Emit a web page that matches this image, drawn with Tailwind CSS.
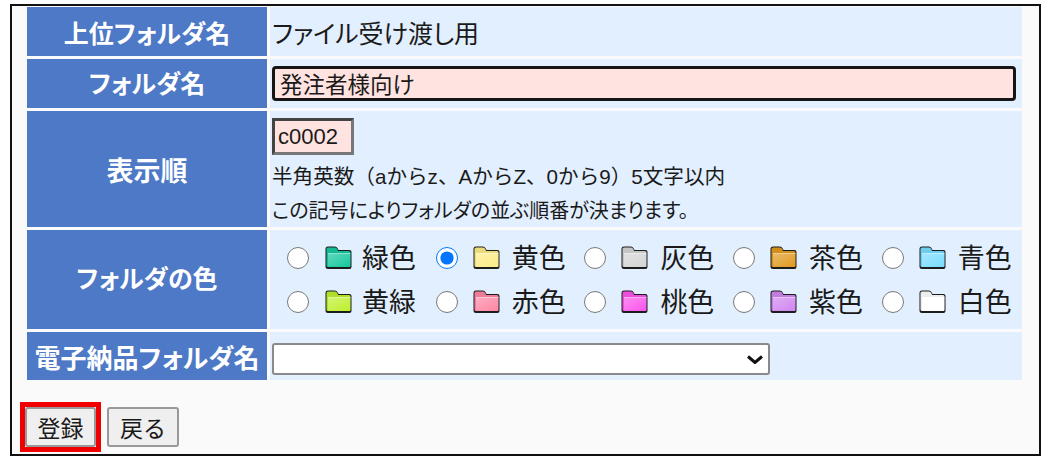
<!DOCTYPE html>
<html lang="ja">
<head>
<meta charset="UTF-8">
<title>フォルダ登録</title>
<script src="https://cdn.jsdelivr.net/npm/@tailwindcss/browser@4"></script>
</head>
<body class="bg-white font-['Liberation_Sans','Noto_Sans_CJK_JP',sans-serif] text-[#1a1a1a]">
<svg class="absolute size-0">
  <defs>
    <linearGradient id="sheen" x1="0" y1="0" x2="1" y2="1">
      <stop offset="0" stop-color="#fff" stop-opacity=".32"/>
      <stop offset="1" stop-color="#fff" stop-opacity="0"/>
    </linearGradient>
  </defs>
  <symbol id="folder" viewBox="0 0 27 23">
    <path d="M.5 20.500V3Q.5 .5 3 .5H10Q12 .5 13 3L13.500 4H24.500Q26.500 4 26.500 6V21Q26.500 23 24.500 23H3Q.5 23 .5 20.500Z" fill="#1c1c1c"/>
    <path d="M1.500 19.500V3Q1.500 1.500 3 1.500H10Q11.500 1.500 12.500 3.500L13 5H24Q25.500 5 25.500 6.500V20Q25.500 21 24.500 21H3Q1.500 21 1.500 19.500Z" fill="currentColor"/>
    <path d="M1.500 19.500V3Q1.500 1.500 3 1.500H10Q11.500 1.500 12.500 3.500L13 5H24Q25.500 5 25.500 6.500V7H3V21Q1.500 21 1.500 19.500Z" fill="#000" opacity=".07"/>
    <path d="M3 7H25.500V8H3Z" fill="#fff" opacity=".5"/>
    <path d="M3 8H25.500V20.500H3Z" fill="url(#sheen)"/>
  </symbol>
</svg>
<div class="mt-[4px] ml-[10px] h-[452px] w-[1031px] border-2 border-[#111] bg-[#fafafa] pt-[1.300px] pl-[15px]">
  <div class="grid w-[995px] grid-cols-[240px_minmax(0,1fr)] grid-rows-[48.700px_48.600px_116.700px_98.700px_48.300px] gap-[3px]">
    <div class="flex items-center justify-center bg-[#4e79c6] pt-[6px] text-[25px] font-bold text-white [font-feature-settings:'palt']">上位フォルダ名</div>
    <div class="flex items-center bg-[#e2effe] pt-[6px] pl-[2px] text-[25px] [font-feature-settings:'palt']">ファイル受け渡し用</div>

    <div class="flex items-center justify-center bg-[#4e79c6] pt-[3px] text-[25px] font-bold text-white [font-feature-settings:'palt']">フォルダ名</div>
    <div class="flex items-center bg-[#e2effe] pl-[2px]">
      <input type="text" value="発注者様向け" class="h-[35px] w-[744px] rounded-[4px] border-[3px] border-[#151515] bg-[#ffe3e0] pl-[5px] text-[22.500px] outline-none">
    </div>

    <div class="flex items-center justify-center bg-[#4e79c6] pt-[6px] text-[27px] font-bold text-white">表示順</div>
    <div class="flex flex-col bg-[#e2effe] pt-[7px] pl-[2px]">
      <input type="text" value="c0002" class="h-[37px] w-[82px] border-[3px] border-t-[#444] border-r-[#777] border-b-[#777] border-l-[#444] bg-[#ffe3e0] pt-[1px] pl-[3px] text-[22px] outline-none">
      <p class="mt-[7px] text-[20.600px] leading-[30px]">半角英数（aからz、AからZ、0から9）5文字以内</p>
      <p class="mt-[3px] text-[20px] leading-[32px] [font-feature-settings:'palt']">この記号によりフォルダの並ぶ順番が決まります。</p>
    </div>

    <div class="flex items-center justify-center bg-[#4e79c6] pt-[1px] text-[25px] font-bold text-white [font-feature-settings:'palt']">フォルダの色</div>
    <div class="grid grid-cols-[repeat(4,148.700px)_1fr] grid-rows-[44px_44px] content-center bg-[#e2effe] pl-[17px] text-[27px]">
      <label class="flex items-center"><input type="radio" name="color" class="size-[22px] accent-[#0075ff]"><svg class="ml-[16px] h-[23px] w-[27px] text-[#14c79e]"><use href="#folder"/></svg><span class="ml-[10px] pt-[3px]">緑色</span></label>
      <label class="flex items-center"><input type="radio" name="color" checked class="size-[22px] accent-[#0075ff]"><svg class="ml-[15px] h-[23px] w-[27px] text-[#fbec85]"><use href="#folder"/></svg><span class="ml-[12px] pt-[3px]">黄色</span></label>
      <label class="flex items-center"><input type="radio" name="color" class="size-[22px] accent-[#0075ff]"><svg class="ml-[15px] h-[23px] w-[27px] text-[#d4d4d4]"><use href="#folder"/></svg><span class="ml-[12px] pt-[3px]">灰色</span></label>
      <label class="flex items-center"><input type="radio" name="color" class="size-[22px] accent-[#0075ff]"><svg class="ml-[15px] h-[23px] w-[27px] text-[#e09a20]"><use href="#folder"/></svg><span class="ml-[12px] pt-[3px]">茶色</span></label>
      <label class="flex items-center"><input type="radio" name="color" class="size-[22px] accent-[#0075ff]"><svg class="ml-[15px] h-[23px] w-[27px] text-[#78dcff]"><use href="#folder"/></svg><span class="ml-[12px] pt-[3px]">青色</span></label>
      <label class="flex items-center"><input type="radio" name="color" class="size-[22px] accent-[#0075ff]"><svg class="ml-[16px] h-[23px] w-[27px] text-[#bdf02c]"><use href="#folder"/></svg><span class="ml-[10px] pt-[3px]">黄緑</span></label>
      <label class="flex items-center"><input type="radio" name="color" class="size-[22px] accent-[#0075ff]"><svg class="ml-[15px] h-[23px] w-[27px] text-[#ff86a4]"><use href="#folder"/></svg><span class="ml-[12px] pt-[3px]">赤色</span></label>
      <label class="flex items-center"><input type="radio" name="color" class="size-[22px] accent-[#0075ff]"><svg class="ml-[15px] h-[23px] w-[27px] text-[#fb55ec]"><use href="#folder"/></svg><span class="ml-[12px] pt-[3px]">桃色</span></label>
      <label class="flex items-center"><input type="radio" name="color" class="size-[22px] accent-[#0075ff]"><svg class="ml-[15px] h-[23px] w-[27px] text-[#d086f0]"><use href="#folder"/></svg><span class="ml-[12px] pt-[3px]">紫色</span></label>
      <label class="flex items-center"><input type="radio" name="color" class="size-[22px] accent-[#0075ff]"><svg class="ml-[15px] h-[23px] w-[27px] text-[#ffffff]"><use href="#folder"/></svg><span class="ml-[12px] pt-[3px]">白色</span></label>
    </div>

    <div class="flex items-center justify-center bg-[#4e79c6] pt-[6px] text-[26px] font-bold text-white [font-feature-settings:'palt']">電子納品フォルダ名</div>
    <div class="flex items-center bg-[#e2effe] pt-[6px] pl-[2px]">
      <div class="relative h-[32px] w-[498px]">
        <select class="size-full appearance-none rounded-[3px] border-2 border-[#8a8a8a] bg-white text-[20px]"><option></option></select>
        <svg class="pointer-events-none absolute top-[12px] right-[7px] h-[9px] w-[16px]" viewBox="0 0 16 9" fill="none" stroke="#111" stroke-width="3"><path d="M1 1.500L8 7.500L15 1.500"/></svg>
      </div>
    </div>
  </div>

  <div class="mt-[22px] -ml-[7px] flex items-center">
    <div class="border-[5px] border-[#f00000]">
      <button class="h-[40px] w-[71px] rounded-[3px] border-2 border-[#999] bg-[#efefef] pt-[3px] text-[23px]">登録</button>
    </div>
    <button class="ml-[6px] h-[40px] w-[72px] rounded-[3px] border-2 border-[#999] bg-[#efefef] pt-[3px] text-[23px]">戻る</button>
  </div>
</div>
</body>
</html>
